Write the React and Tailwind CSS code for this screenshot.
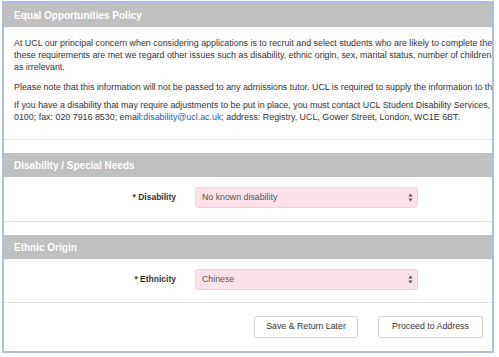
import React from "react";

const font = { fontFamily: '"Liberation Sans", Arial, sans-serif' };

function SectionHeader({ title, className = "" }) {
  return (
    <div className={`flex h-[24px] items-center bg-[#c0c0c0] pl-[10px] text-[10px] font-bold text-white ${className}`}>
      {title}
    </div>
  );
}

function Arrows() {
  return (
    <svg width="5" height="9" viewBox="0 0 5 9" className="text-[#555]">
      <path d="M2.5 0.5 L4.6 3.5 L0.4 3.5 Z" fill="currentColor" />
      <path d="M2.5 8.5 L4.6 5.5 L0.4 5.5 Z" fill="currentColor" />
    </svg>
  );
}

function SelectRow({ label, value, pb }) {
  return (
    <div className={`flex items-center border-b border-[#e2e2e2] pt-[10px] ${pb}`}>
      <div className="w-[172px] text-right text-[8.5px] font-bold text-[#333]">{label}</div>
      <div className="ml-[19px] flex h-[21px] w-[223px] items-center justify-between rounded-[3px] border border-[#f3cfd9] bg-[#fbe2ea] pl-[6px] pr-[4px] text-[8.8px] text-[#555]">
        <span>{value}</span>
        <Arrows />
      </div>
    </div>
  );
}

export default function App() {
  return (
    <div className="relative h-[357px] w-[499px] overflow-hidden bg-white" style={font}>
      {/* FRAME */}
      <div className="ml-[2px] mt-[1px] flex h-[352px] w-[492px] flex-col overflow-hidden border-2 border-[#aebde2] bg-white">
        <SectionHeader title="Equal Opportunities Policy" />

        {/* POLICY TEXT */}
        <div className="overflow-hidden whitespace-nowrap border-b border-[#e2e2e2] pb-[16px] pl-[10px] pt-[10px] text-[8.9px] leading-[12px] text-[#333]">
          <p>
            At UCL our principal concern when considering applications is to recruit and select students who are likely to complete their
            <br />
            these requirements are met we regard other issues such as disability, ethnic origin, sex, marital status, number of children,
            <br />
            as irrelevant.
          </p>
          <p className="mt-[8px]">
            Please note that this information will not be passed to any admissions tutor. UCL is required to supply the information to the
          </p>
          <p className="mt-[6px]">
            If you have a disability that may require adjustments to be put in place, you must contact UCL Student Disability Services, tel
            <br />
            0100; fax: 020 7916 8530; email:<span className="text-[#2a5bb5]">disability@ucl.ac.uk</span>; address: Registry, UCL, Gower Street, London, WC1E 6BT.
          </p>
        </div>

        <SectionHeader title="Disability / Special Needs" className="mt-[13px]" />
        <SelectRow label="* Disability" value="No known disability" pb="pb-[13px]" />

        <SectionHeader title="Ethnic Origin" className="mt-[13px]" />
        <SelectRow label="* Ethnicity" value="Chinese" pb="pb-[12px]" />

        {/* BUTTONS */}
        <div className="flex justify-end gap-[20px] pr-[9px] pt-[13px]">
          <button className="h-[22px] w-[104px] rounded-[2px] border border-[#d6d6d6] bg-white text-[8.8px] text-[#333]">
            Save &amp; Return Later
          </button>
          <button className="h-[22px] w-[105px] rounded-[2px] border border-[#d6d6d6] bg-white text-[8.8px] text-[#333]">
            Proceed to Address
          </button>
        </div>
      </div>
    </div>
  );
}
